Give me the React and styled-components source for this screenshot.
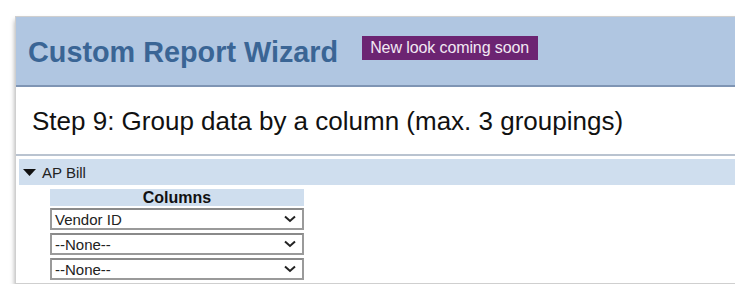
import React from "react";
import styled, { createGlobalStyle } from "styled-components";

const GlobalStyle = createGlobalStyle`
  html, body {
    margin: 0;
    padding: 0;
    background: #fff;
    overflow: hidden;
    font-family: "Liberation Sans", Arial, sans-serif;
  }
`;

const Page = styled.div`
  padding: 16px 0 0 15px;
  width: 760px;
`;

const Panel = styled.div`
  border: 1px solid #cfcfcf;
  border-right: none;
  background: #fff;
  box-shadow: 0 4px 5px rgba(0, 0, 0, 0.35);
  padding-bottom: 3px;
`;

const Header = styled.div`
  height: 68px;
  background: #b0c6e1;
  border-bottom: 2px solid #7f95b4;
  display: flex;
  align-items: center;
  padding-left: 12px;
  gap: 24px;
`;

const Title = styled.h1`
  margin: 0;
  font-size: 28.8px;
  font-weight: bold;
  color: #3a6595;
  position: relative;
  top: 1px;
`;

const Badge = styled.span`
  background: #6c2472;
  color: #f2e8f2;
  font-size: 16px;
  height: 24px;
  line-height: 24px;
  padding: 0 9px 0 8px;
  letter-spacing: -0.1px;
  position: relative;
  top: -3px;
`;

const Step = styled.div`
  height: 69px;
  box-sizing: border-box;
  border-bottom: 2px solid #b9c3d0;
  display: flex;
  align-items: center;
  padding: 2px 0 0 16px;
  font-size: 26px;
  color: #111;
`;

const Body = styled.div`
  padding: 3px 0 0 3px;
`;

const GroupBar = styled.div`
  height: 26px;
  background: #cfdeee;
  display: flex;
  align-items: center;
  padding-left: 4px;
  gap: 6px;
  font-size: 15px;
  color: #222;
`;

const ColumnsTable = styled.div`
  width: 254px;
  margin: 4px 0 0 31px;
  display: flex;
  flex-direction: column;
  gap: 3px;
`;

const ColumnsHead = styled.div`
  height: 17px;
  background: #cfdeee;
  text-align: center;
  font-size: 16px;
  font-weight: bold;
  color: #111;
  line-height: 18px;
  margin-bottom: -1px;
`;

const SelectBox = styled.div`
  height: 18px;
  border: 2px solid #9a9a9a;
  border-top-color: #8a8a8a;
  background: #fff;
  display: flex;
  align-items: center;
  justify-content: space-between;
  padding: 0 6px 0 3px;
  font-size: 15px;
  color: #222;
`;

const Chevron = () => (
  <svg width="12" height="8" viewBox="0 0 12 8">
    <path d="M1 1.5 L6 6 L11 1.5" fill="none" stroke="#222" strokeWidth="2" />
  </svg>
);

const Caret = () => (
  <svg width="13" height="9" viewBox="0 0 13 9">
    <path d="M0 1 L13 1 L6.5 8 Z" fill="#111" />
  </svg>
);

const selects = ["Vendor ID", "--None--", "--None--"];

export default function App() {
  return (
    <>
      <GlobalStyle />
      <Page>
        <Panel>
          <Header>
            <Title>Custom Report Wizard</Title>
            <Badge>New look coming soon</Badge>
          </Header>
          <Step>Step 9: Group data by a column (max. 3 groupings)</Step>
          <Body>
            <GroupBar>
              <Caret />
              AP Bill
            </GroupBar>
            <ColumnsTable>
              <ColumnsHead>Columns</ColumnsHead>
              {selects.map((s, i) => (
                <SelectBox key={i}>
                  {s}
                  <Chevron />
                </SelectBox>
              ))}
            </ColumnsTable>
          </Body>
        </Panel>
      </Page>
    </>
  );
}
